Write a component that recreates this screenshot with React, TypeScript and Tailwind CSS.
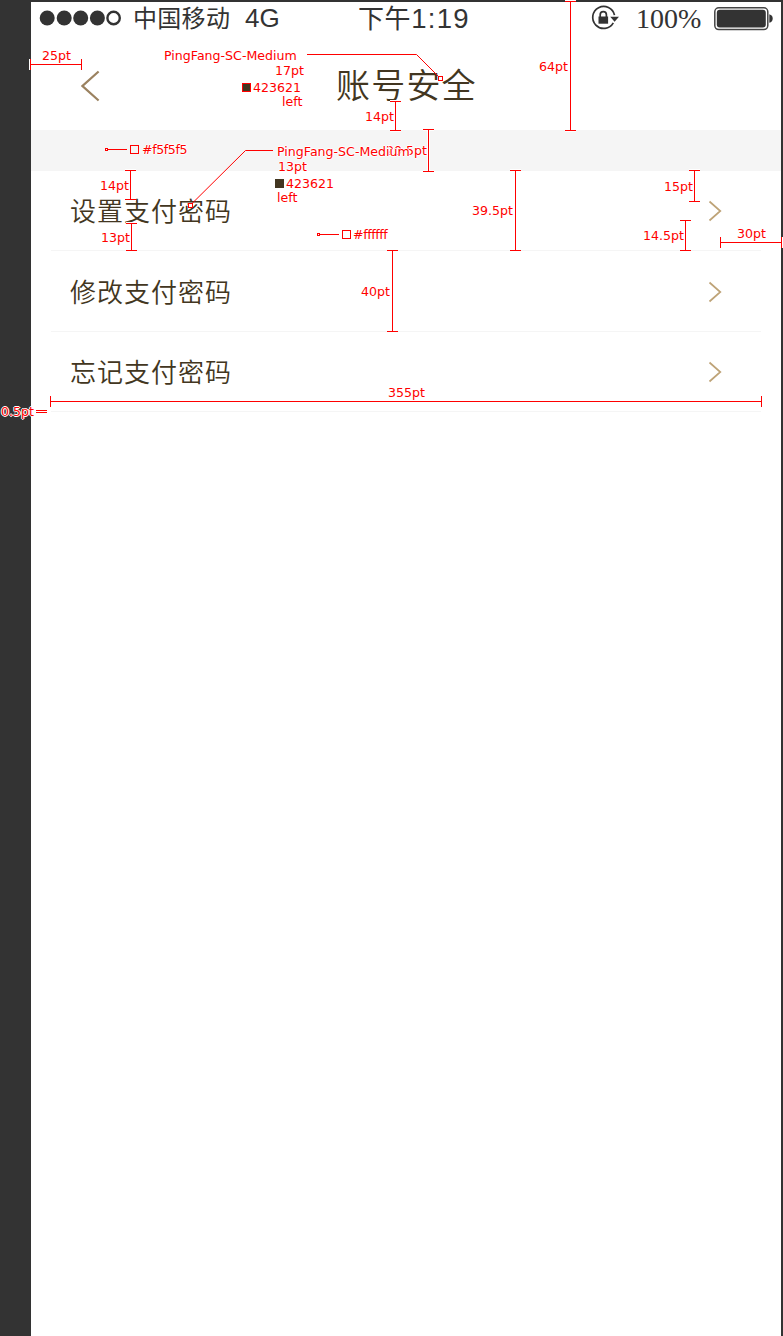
import type { ReactNode } from "react";

const rows = ["设置支付密码", "修改支付密码", "忘记支付密码"];

/* Vertical dimension: x, top, bottom */
const verticals = [
  [570, 1, 130],
  [395, 101, 130],
  [428, 129, 171],
  [130, 170, 199],
  [131, 223, 250],
  [515, 170, 250],
  [694, 170, 201],
  [685, 220, 250],
  [392, 250, 331],
];

/* Horizontal dimension: y, left, right */
const horizontals = [
  [64, 30, 81],
  [242, 720, 781],
  [401, 50, 761],
];

function Label({ at, children }: { at: string; children: ReactNode }) {
  return (
    <span
      className={`absolute whitespace-nowrap font-['DejaVu_Sans',sans-serif] text-[12.6px] leading-[14px] text-[#ff0000] [text-shadow:1px_0_0_#fff,-1px_0_0_#fff,0_1px_0_#fff,0_-1px_0_#fff] ${at}`}
    >
      {children}
    </span>
  );
}

function StatusBar() {
  return (
    <div className="flex h-[32px] items-center text-[#333333]">
      <svg className="ml-[8px] shrink-0" width="84" height="16" viewBox="0 0 84 16" fill="#333">
        <circle cx="8.2" cy="8" r="7.5" />
        <circle cx="25.2" cy="8" r="7.5" />
        <circle cx="41.7" cy="8" r="7.5" />
        <circle cx="58.4" cy="8" r="7.5" />
        <circle cx="74.6" cy="8" r="6.2" fill="none" stroke="#333" strokeWidth="2.4" />
      </svg>
      <span className="ml-[10px] w-[112px] whitespace-nowrap pb-[2px] font-['Noto_Sans_CJK_SC',sans-serif] text-[24px] leading-[32px] tracking-[0.3px]">
        中国移动
      </span>
      <span className="w-[113px] whitespace-nowrap pb-px font-['Liberation_Sans',sans-serif] text-[26px] leading-[32px]">4G</span>
      <span className="flex w-[233px] items-baseline whitespace-nowrap font-['Noto_Sans_CJK_SC',sans-serif] text-[26px] leading-[30px] tracking-[0.6px]">
        下午
        <span className="font-['Liberation_Sans',sans-serif] text-[27.5px] tracking-[1.3px]">1:19</span>
      </span>
      <svg className="shrink-0" width="30" height="28" viewBox="0 0 30 28" fill="none" stroke="#333" strokeWidth="1.7">
        <path d="M23.5 11.2A11 11 0 1 0 22.3 18.8" />
        <path d="M19.2 12.7h8.8l-4.4 5z" fill="#333" stroke="none" />
        <rect x="7.5" y="12.5" width="9.6" height="7.2" fill="#333" stroke="none" />
        <path d="M9.2 13v-2.3a3.1 3.1 0 0 1 6.2 0V13" />
      </svg>
      <span className="ml-[15px] w-[78px] pt-[2px] font-['Liberation_Serif',serif] text-[28px] leading-[32px]">100%</span>
      <svg className="mt-[2px] shrink-0" width="60" height="24" viewBox="0 0 60 24" fill="none">
        <rect x="0.8" y="0.8" width="53" height="21.8" rx="4" stroke="#444" strokeWidth="1.5" />
        <rect x="2.8" y="2.8" width="49" height="17.8" rx="3" fill="#333" />
        <path d="M55.3 7.2q3.4 1 3.4 4.3t-3.4 4.3z" fill="#333" />
      </svg>
    </div>
  );
}

function Redlines() {
  return (
    <div className="pointer-events-none absolute inset-0">
      <svg className="absolute inset-0" width="783" height="1336" fill="none" stroke="#ff0000">
        {verticals.map(([x, a, b], i) => {
          const d = `M${x - 5} ${a + 0.5}h11M${x - 5} ${b + 0.5}h11M${x + 0.5} ${a}V${b + 1}`;
          return (
            <g key={i}>
              <path d={d} stroke="#fff" strokeWidth="3" />
              <path d={d} />
            </g>
          );
        })}
        {horizontals.map(([y, a, b], i) => {
          const d = `M${a + 0.5} ${y - 5}v11M${b + 0.5} ${y - 5}v11M${a} ${y + 0.5}H${b + 1}`;
          return (
            <g key={i}>
              <path d={d} stroke="#fff" strokeWidth="3" />
              <path d={d} />
            </g>
          );
        })}
        <path d="M36 410.5h11M36 412.5h11" />
        <path d="M307 54.5H416.5L439 77" />
        <path d="M273 150.5H245.5L191 204.5" />
        <path d="M107 149.5h20M320 234.5h19" />
        <g fill="#fff">
          <rect x="438.5" y="76.5" width="4" height="4" />
          <rect x="188.5" y="203.5" width="4" height="4" />
          <rect x="105.5" y="148.5" width="2" height="2" />
          <rect x="317.5" y="233.5" width="2" height="2" />
          <rect x="130.5" y="145.5" width="8" height="8" fill="#f5f5f5" />
          <rect x="342.5" y="230.5" width="8" height="8" />
        </g>
        <g fill="#423621">
          <rect x="242.5" y="83.5" width="8" height="8" />
          <rect x="275.5" y="179.5" width="8" height="8" stroke="#423621" />
        </g>
      </svg>
      <Label at="left-[42px] top-[49px]">25pt</Label>
      <Label at="left-[164px] top-[49px]">PingFang-SC-Medium</Label>
      <Label at="left-[275px] top-[64px]">17pt</Label>
      <Label at="left-[253px] top-[81px]">423621</Label>
      <Label at="left-[282px] top-[95px]">left</Label>
      <Label at="left-[539px] top-[60px]">64pt</Label>
      <Label at="left-[365px] top-[110px]">14pt</Label>
      <Label at="left-[142px] top-[143px] tracking-[-0.4px]">#f5f5f5</Label>
      <Label at="left-[386px] top-[144px]">20.5pt</Label>
      <Label at="left-[277px] top-[145px]">PingFang-SC-Medium</Label>
      <Label at="left-[278px] top-[160px]">13pt</Label>
      <Label at="left-[286px] top-[177px]">423621</Label>
      <Label at="left-[277px] top-[191px]">left</Label>
      <Label at="left-[100px] top-[179px]">14pt</Label>
      <Label at="left-[101px] top-[231px]">13pt</Label>
      <Label at="left-[472px] top-[204px]">39.5pt</Label>
      <Label at="left-[353px] top-[228px] tracking-[-0.4px]">#ffffff</Label>
      <Label at="left-[664px] top-[180px]">15pt</Label>
      <Label at="left-[643px] top-[229px]">14.5pt</Label>
      <Label at="left-[737px] top-[227px]">30pt</Label>
      <Label at="left-[361px] top-[285px]">40pt</Label>
      <Label at="left-[388px] top-[386px]">355pt</Label>
      <Label at="left-[1px] top-[405px]">0.5pt</Label>
    </div>
  );
}

export default function App() {
  return (
    <div className="relative h-[1336px] w-[783px] overflow-hidden bg-[#333333] pl-[31px] pr-[2px] pt-[2px]">
      <main className="h-full bg-white">
        <header className="h-[128px]">
          <StatusBar />
          <div className="flex h-[96px] items-start pl-[50px]">
            <svg className="mt-[36px] shrink-0" width="20" height="32" viewBox="0 0 20 32" fill="none" stroke="#9b8260" strokeWidth="2.2">
              <path d="M17.6 1.5L1.5 16l16.1 14.5" />
            </svg>
            <h1 className="ml-[235px] mt-[25px] whitespace-nowrap font-['Noto_Sans_CJK_SC',sans-serif] text-[34px] font-[350] leading-[50px] tracking-[1.2px] text-[#423621]">
              账号安全
            </h1>
          </div>
        </header>
        <div className="h-[41px] bg-[#f5f5f5]" />
        <ul className="ml-[20px] w-[710px]">
          {rows.map((row, i) => (
            <li
              key={row}
              className={`flex items-center justify-between border-b border-[#f5f5f5] pl-[19px] pr-[39px] ${i === 1 ? "h-[81px] pt-[2px]" : "h-[80px]"}`}
            >
              <span className="whitespace-nowrap pb-[2px] font-['Noto_Sans_CJK_SC',sans-serif] text-[26px] font-[350] leading-[40px] tracking-[1px] text-[#423621]">
                {row}
              </span>
              <svg className="shrink-0" width="14" height="22" viewBox="0 0 14 22" fill="none" stroke="#bea377" strokeWidth="1.7">
                <path d="M1.5 1.5L12.3 11 1.5 20.5" />
              </svg>
            </li>
          ))}
        </ul>
      </main>
      <Redlines />
    </div>
  );
}
